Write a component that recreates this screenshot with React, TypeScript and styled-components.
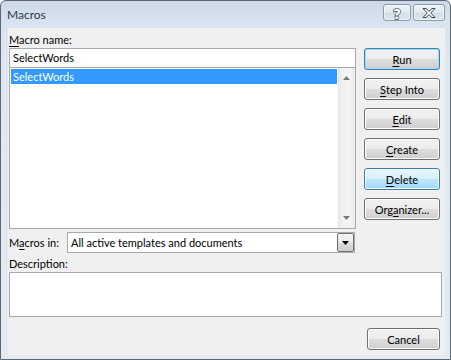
import React from "react";
import styled, { createGlobalStyle, css } from "styled-components";

const GlobalStyle = createGlobalStyle`
  html, body { margin: 0; padding: 0; background: #ffffff; }
  body {
    font-family: Lato, "Open Sans", sans-serif;
    font-size: 11px;
    color: #000;
  }
  * { box-sizing: border-box; }
`;

type BtnState = "normal" | "default" | "hover";

const buttons: { label: string; key: number; state: BtnState }[] = [
  { label: "Run", key: 0, state: "default" },
  { label: "Step Into", key: 0, state: "normal" },
  { label: "Edit", key: 0, state: "normal" },
  { label: "Create", key: 0, state: "normal" },
  { label: "Delete", key: 0, state: "hover" },
  { label: "Organizer...", key: 3, state: "normal" },
];

function Mnemonic({ text, index }: { text: string; index: number }) {
  if (index < 0) return <>{text}</>;
  return (
    <>
      {text.slice(0, index)}
      <U>{text[index]}</U>
      {text.slice(index + 1)}
    </>
  );
}

export default function App() {
  return (
    <>
      <GlobalStyle />
      <Window>
        <TitleBar>
          <Title>Macros</Title>
          <CaptionButtons>
            <CaptionBtn $w={28} aria-label="Help">
              <svg width="14" height="14" viewBox="0 0 14 14">
                <text
                  x="7"
                  y="12.5"
                  textAnchor="middle"
                  fontFamily="DejaVu Sans, sans-serif"
                  fontWeight="bold"
                  fontSize="14"
                  fill="#ffffff"
                  stroke="#3b4654"
                  strokeWidth="1.3"
                  paintOrder="stroke"
                >
                  ?
                </text>
              </svg>
            </CaptionBtn>
            <CaptionBtn $w={32} aria-label="Close">
              <svg width="14" height="12" viewBox="0 0 14 12">
                <path
                  d="M1 1.5 L4 1.5 L7 4.3 L10 1.5 L13 1.5 L8.8 6 L13 10.5 L10 10.5 L7 7.7 L4 10.5 L1 10.5 L5.2 6 Z"
                  fill="#ffffff"
                  stroke="#3b4654"
                  strokeWidth="1"
                  strokeLinejoin="round"
                />
              </svg>
            </CaptionBtn>
          </CaptionButtons>
        </TitleBar>

        <Frame>
          <Client>
            <TopGrid>
              <LeftCol>
                <Label>
                  <Mnemonic text="Macro name:" index={0} />
                </Label>
                <NameInput>SelectWords</NameInput>
                <ListBox>
                  <Items>
                    <Item $selected>SelectWords</Item>
                  </Items>
                  <ScrollBar>
                    <ScrollArrow>
                      <svg width="7" height="4" viewBox="0 0 7 4">
                        <path d="M0 4 L3.5 0 L7 4 Z" fill="#7a7a7a" />
                      </svg>
                    </ScrollArrow>
                    <ScrollArrow>
                      <svg width="7" height="4" viewBox="0 0 7 4">
                        <path d="M0 0 L7 0 L3.5 4 Z" fill="#7a7a7a" />
                      </svg>
                    </ScrollArrow>
                  </ScrollBar>
                </ListBox>
                <ComboRow>
                  <Label>
                    <Mnemonic text="Macros in:" index={1} />
                  </Label>
                  <Combo>
                    <ComboText>All active templates and documents</ComboText>
                    <DropBtn>
                      <svg width="7" height="4" viewBox="0 0 7 4">
                        <path d="M0 0 L7 0 L3.5 4 Z" fill="#000" />
                      </svg>
                    </DropBtn>
                  </Combo>
                </ComboRow>
              </LeftCol>

              <ButtonCol>
                {buttons.map((b) => (
                  <Button key={b.label} $state={b.state}>
                    <Mnemonic text={b.label} index={b.key} />
                  </Button>
                ))}
              </ButtonCol>
            </TopGrid>

            <DescLabel>Description:</DescLabel>
            <DescBox />

            <Footer>
              <Button $state="normal" $width={73}>
                Cancel
              </Button>
            </Footer>
          </Client>
        </Frame>
      </Window>
    </>
  );
}

/* --- window chrome --- */

const Window = styled.div`
  width: 451px;
  height: 360px;
  display: flex;
  flex-direction: column;
  border: 1px solid #5d6772;
  border-radius: 6px 6px 0 0;
  background: linear-gradient(#cdd9e7 0px, #d9e3ef 20px, #dfe8f2 60px, #e2eaf3 100%);
  overflow: hidden;
`;

const TitleBar = styled.div`
  height: 27px;
  flex: none;
  display: flex;
  align-items: flex-start;
  justify-content: space-between;
  padding: 3px 5px 0 6px;
`;

const Title = styled.div`
  line-height: 21px;
  font-size: 12px;
  color: #2a3a4c;
`;

const CaptionButtons = styled.div`
  display: flex;
  gap: 2px;
`;

const CaptionBtn = styled.div<{ $w: number }>`
  width: ${(p) => p.$w}px;
  height: 17px;
  display: flex;
  align-items: center;
  justify-content: center;
  border: 1px solid #8d9aaa;
  border-radius: 3px;
  background: linear-gradient(#eef3f8, #dfe7f0 50%, #d3dde9 51%, #dbe4ee);
  box-shadow: inset 0 0 0 1px rgba(255, 255, 255, 0.5);
`;

const Frame = styled.div`
  flex: 1;
  display: flex;
  padding: 0 5px 4px 7px;
`;

const Client = styled.div`
  flex: 1;
  display: flex;
  flex-direction: column;
  background: #f0f0f0;
  padding: 4px 3px 0 1px;
`;

/* --- content --- */

const U = styled.span`
  text-decoration: underline;
  text-underline-offset: 2px;
`;

const TopGrid = styled.div`
  display: grid;
  grid-template-columns: 347px 76px;
  column-gap: 8px;
`;

const LeftCol = styled.div`
  display: flex;
  flex-direction: column;
`;

const Label = styled.div`
  line-height: 16px;
  height: 16px;
  white-space: nowrap;
`;

const NameInput = styled.div`
  height: 20px;
  line-height: 18px;
  padding: 0 3px;
  background: #fff;
  border: 1px solid #a7a9b0;
`;

const ListBox = styled.div`
  height: 161px;
  display: flex;
  background: #fff;
  border: 1px solid #a7a9b0;
  border-top: none;
`;

const Items = styled.div`
  flex: 1;
  padding: 1px;
`;

const Item = styled.div<{ $selected?: boolean }>`
  height: 15px;
  line-height: 15px;
  padding-left: 2px;
  ${(p) =>
    p.$selected &&
    css`
      background: #3399ff;
      color: #fff;
    `}
`;

const ScrollBar = styled.div`
  width: 17px;
  display: flex;
  flex-direction: column;
  justify-content: space-between;
  background: linear-gradient(to right, #e6e6e6, #f2f2f2 30%, #f4f4f4 70%, #e9e9e9);
`;

const ScrollArrow = styled.div`
  height: 20px;
  display: flex;
  align-items: center;
  justify-content: center;
`;

const ComboRow = styled.div`
  margin-top: 3px;
  height: 21px;
  display: flex;
  align-items: center;
`;

const Combo = styled.div`
  margin-left: auto;
  margin-right: 1px;
  width: 288px;
  height: 21px;
  display: flex;
  background: #fff;
  border: 1px solid #a7a9b0;
`;

const ComboText = styled.div`
  flex: 1;
  line-height: 19px;
  padding-left: 3px;
`;

const DropBtn = styled.div`
  width: 17px;
  height: 19px;
  display: flex;
  align-items: center;
  justify-content: center;
  border: 1px solid #707070;
  border-radius: 2px;
  background: linear-gradient(#f2f2f2 0%, #ebebeb 50%, #dddddd 51%, #cfcfcf 100%);
`;

const ButtonCol = styled.div`
  display: flex;
  flex-direction: column;
  gap: 8px;
  padding-top: 16px;
`;

const Button = styled.div<{ $state: BtnState; $width?: number }>`
  width: ${(p) => (p.$width ? `${p.$width}px` : "100%")};
  height: 22px;
  display: flex;
  align-items: center;
  justify-content: center;
  white-space: nowrap;
  border-radius: 3px;
  border: 1px solid #707070;
  background: linear-gradient(#f2f2f2 0%, #ebebeb 50%, #dddddd 51%, #cfcfcf 100%);
  box-shadow: inset 0 0 0 1px #fcfcfc;
  ${(p) =>
    p.$state === "default" &&
    css`
      border-color: #3c7fb1;
      box-shadow: inset 0 0 0 1px #9fdcf6;
    `}
  ${(p) =>
    p.$state === "hover" &&
    css`
      border-color: #3c7fb1;
      background: linear-gradient(#eaf6fd 0%, #d9f0fc 50%, #bee6fd 51%, #a7d9f5 100%);
      box-shadow: inset 0 0 0 1px #f4fbfe;
    `}
`;

const DescLabel = styled(Label)`
  margin-top: 3px;
`;

const DescBox = styled.div`
  height: 45px;
  background: #fff;
  border: 1px solid #a7a9b0;
`;

const Footer = styled.div`
  margin-top: 11px;
  display: flex;
  justify-content: flex-end;
  padding-right: 2px;
`;
